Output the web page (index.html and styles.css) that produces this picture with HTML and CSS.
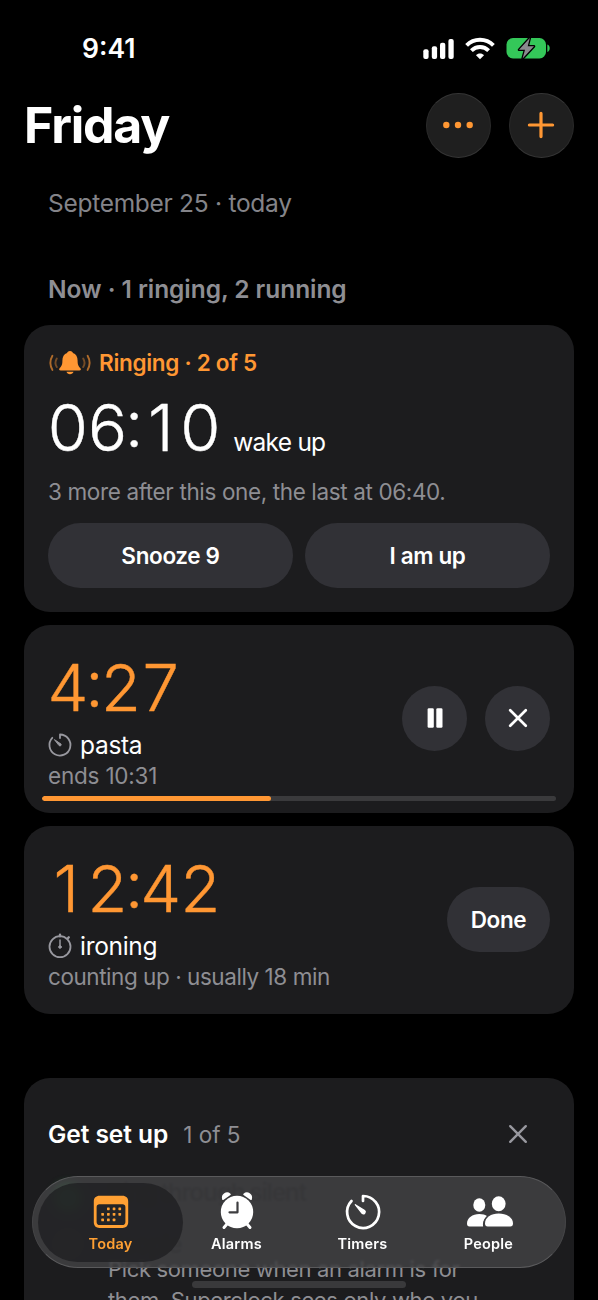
FILE: index.html
```html
<!DOCTYPE html>
<html lang="en">
<head>
<meta charset="utf-8">
<title>Friday</title>
<link rel="stylesheet" href="styles.css">
</head>
<body>
<div class="screen">
  <header class="status">
    <span class="clock">9:41</span>
    <svg class="status-icons" width="128" height="24" viewBox="0 0 128 24">
      <g fill="#fff">
        <rect x="1.300" y="13.300" width="5.300" height="9.700" rx="2"/>
        <rect x="9.800" y="10.300" width="5.300" height="12.700" rx="2"/>
        <rect x="18" y="6.700" width="5.300" height="16.300" rx="2"/>
        <rect x="26.400" y="3" width="5.300" height="20" rx="2"/>
      </g>
      <g fill="none" stroke="#fff" stroke-width="3.900">
        <path d="M44.600 9.400a18.600 18.600 0 0 1 26.800 0"/>
        <path d="M49.400 14.600a12 12 0 0 1 17.200 0"/>
      </g>
      <path fill="#fff" d="M58 23.200l-4-4c1.900-2.400 6.100-2.400 8 0z"/>
      <rect x="84.500" y="2" width="39.500" height="20.500" rx="6.500" fill="#34c759"/>
      <path d="M125.300 8.500c3.200 1.200 3.200 6.300 0 7.500z" fill="#34c759"/>
      <path d="M107.800 2L97 13.800h6l-2.400 8.700L112 10.300h-6.300z" fill="#8a8a8e" stroke="#000" stroke-width="2.600" stroke-linejoin="round" paint-order="stroke"/>
    </svg>
  </header>

  <div class="title-row">
    <h1>Friday</h1>
    <button class="glass"><svg width="32" height="32" viewBox="0 0 32 32" fill="#ff9733"><circle cx="4.300" cy="16" r="3.200"/><circle cx="16" cy="16" r="3.200"/><circle cx="27.700" cy="16" r="3.200"/></svg></button>
    <button class="glass"><svg width="32" height="32" viewBox="0 0 32 32" stroke="#ff9733" stroke-width="3.200" stroke-linecap="round"><path d="M16 4.400v23.200M4.400 16h23.200"/></svg></button>
  </div>
  <p class="date">September 25 · today</p>
  <h2 class="section">Now · 1 ringing, 2 running</h2>

  <section class="card ringing">
    <div class="ring-label">
      <svg width="42" height="26" viewBox="0 0 42 26">
        <path fill="#ff9733" d="M21 1c-1.800 0-2.700 1-2.900 2.100-3.200 1-4.700 3.900-4.700 7.400 0 4.200-.8 5.500-2.400 7.300-1.500 1.600-.9 2.700.7 2.700h18.600c1.600 0 2.200-1.100.7-2.700-1.600-1.800-2.400-3.100-2.400-7.300 0-3.500-1.500-6.400-4.700-7.400C23.700 2 22.800 1 21 1zM17.500 21.700h7c-.6 3.300-6.400 3.300-7 0z"/>
        <g fill="none" stroke="#ff9733" stroke-width="1.900" stroke-linecap="round">
          <path opacity=".4" d="M7.800 8.500q-2.700 4.300 0 8.600M34.200 8.500q2.700 4.300 0 8.600"/>
          <path opacity=".65" d="M3.400 5.700q-4 7 0 14.200M38.600 5.700q4 7 0 14.200"/>
        </g>
      </svg>
      <span>Ringing · 2 of 5</span>
    </div>
    <div class="alarm"><div class="time"><span>0</span><span>6</span><i>:</i><span>1</span><span>0</span></div><span class="name">wake up</span></div>
    <p class="note">3 more after this one, the last at 06:40.</p>
    <div class="actions"><button class="pill">Snooze 9</button><button class="pill">I am up</button></div>
  </section>

  <section class="card">
    <div class="timer">
      <div class="details">
        <div class="time"><span>4</span><i>:</i><span>2</span><span>7</span></div>
        <div class="label">
          <svg width="24" height="24" viewBox="0 0 24 24" fill="none" stroke="#98989f" stroke-width="1.800" stroke-linecap="round" stroke-linejoin="round"><path d="M12 5V1.500a10.500 10.500 0 1 1-7.700 3.300"/><path fill="#98989f" stroke-width="1" d="M6.700 6.800l6.300 4.300a1.200 1.200 0 0 1-1.600 1.700z"/></svg>
          <span>pasta</span>
        </div>
        <p class="sub ends">ends 10:31</p>
      </div>
      <div class="controls">
        <button class="round"><svg width="20" height="20" viewBox="0 0 20 20" fill="#fff"><rect x="2.600" y=".3" width="6.200" height="19.500" rx="1.300"/><rect x="11.300" y=".3" width="6.200" height="19.500" rx="1.300"/></svg></button>
        <button class="round"><svg width="20" height="20" viewBox="0 0 20 20" stroke="#fff" stroke-width="2.700" stroke-linecap="round"><path d="M2.200 2.200l15.600 15.600M17.800 2.200L2.200 17.800"/></svg></button>
      </div>
    </div>
    <div class="track"><div class="fill" style="width:44.6%"></div></div>
  </section>

  <section class="card">
    <div class="timer">
      <div class="details">
        <div class="time"><span class="lead">1</span><span>2</span><i>:</i><span>4</span><span>2</span></div>
        <div class="label">
          <svg width="24" height="24" viewBox="0 0 24 24" fill="none" stroke="#98989f" stroke-width="1.800" stroke-linecap="round"><circle cx="12" cy="12.700" r="10.500"/><path d="M12 .8v1.400M20.800 3.300l-.9 1" stroke-width="2.400"/><path d="M12 6v6" stroke-width="1.500"/><circle cx="12" cy="13" r="1.300" fill="#98989f" stroke-width="1"/></svg>
          <span>ironing</span>
        </div>
        <p class="sub counting">counting up · usually 18 min</p>
      </div>
      <button class="pill done">Done</button>
    </div>
  </section>

  <section class="card setup">
    <div class="setup-head">
      <h3>Get set up</h3><span>1 of 5</span>
      <svg width="20" height="20" viewBox="0 0 20 20" stroke="#98989f" stroke-width="2.400" stroke-linecap="round"><path d="M2.200 2.200l15.600 15.600M17.800 2.200L2.200 17.800"/></svg>
    </div>
    <div class="step"><i class="check"></i><b>Ring through silent</b></div>
    <div class="step person"><i class="dot"></i><b>People</b></div>
    <p class="body">Pick someone when an alarm is for<br>them. Superclock sees only who you</p>
  </section>

  <div class="home"></div>
  <nav class="tabs">
    <a class="tab active"><svg width="40" height="40" viewBox="0 0 40 40"><path fill="#ffa033" fill-rule="evenodd" d="M8.500 3.800h23c3.500 0 5.700 2.200 5.700 5.700v20.700c0 3.500-2.200 5.700-5.700 5.700h-23c-3.500 0-5.700-2.200-5.700-5.700V9.500c0-3.500 2.200-5.700 5.700-5.700zM8.400 12.300c-1.700 0-2.800 1-2.800 2.700v14.900c0 2 1.200 3.200 3.200 3.200h22.400c2 0 3.200-1.200 3.200-3.200V15c0-1.700-1.100-2.700-2.800-2.700z"/><g fill="#ffa033"><rect x="16" y="15.500" width="2.700" height="2.700" rx=".6"/><rect x="21.700" y="15.500" width="2.700" height="2.700" rx=".6"/><rect x="27.400" y="15.500" width="2.700" height="2.700" rx=".6"/><rect x="10.300" y="21" width="2.700" height="2.700" rx=".6"/><rect x="16" y="21" width="2.700" height="2.700" rx=".6"/><rect x="21.700" y="21" width="2.700" height="2.700" rx=".6"/><rect x="27.400" y="21" width="2.700" height="2.700" rx=".6"/><rect x="10.300" y="26.600" width="2.700" height="2.700" rx=".6"/><rect x="16" y="26.600" width="2.700" height="2.700" rx=".6"/><rect x="21.700" y="26.600" width="2.700" height="2.700" rx=".6"/></g></svg><span>Today</span></a>
    <a class="tab"><svg width="40" height="40" viewBox="0 0 40 40"><g stroke="#fff" stroke-width="3" stroke-linecap="round"><path d="M10 32l-3 3.500M30 32l3 3.500"/></g><circle cx="20" cy="20" r="16.200" fill="#fff"/><path fill="#fff" stroke="#fff" stroke-width="1.500" stroke-linejoin="round" d="M5.900 7.300C4.600 2.600 9.600-.6 13 2.400zM34.100 7.300C35.400 2.600 30.400-.6 27 2.400z"/><path d="M20.500 10.500v9.800h-8" fill="none" stroke="#3e3e40" stroke-width="2.200" stroke-linecap="round" stroke-linejoin="round"/></svg><span>Alarms</span></a>
    <a class="tab"><svg width="40" height="40" viewBox="0 0 40 40" fill="none" stroke="#fff" stroke-width="2.700" stroke-linecap="round" stroke-linejoin="round"><path d="M20 9V4a16 16 0 1 1-11.500 5"/><path fill="#fff" stroke-width="1.300" d="M12.300 12.700l9.300 5.900a1.800 1.800 0 0 1-2.500 2.700z"/></svg><span>Timers</span></a>
    <a class="tab"><svg width="48" height="40" viewBox="0 0 48 40" fill="#fff"><ellipse cx="14.300" cy="13" rx="6" ry="6.700"/><path d="M2 31.500C2 26 7.500 22 14.300 22c3.300 0 6 .9 8 2.300-2.900 2.200-4.900 5.600-4.200 10.200H4.500C2.800 34.500 2 33.500 2 31.500z"/><path d="M20 31.500C20 25.500 26 21.600 33.700 21.600S48 25.500 48 31.500c0 2-.9 3-2.700 3H22.700c-1.800 0-2.700-1-2.700-3z" stroke="#3e3e40" stroke-width="3" paint-order="stroke"/><ellipse cx="33.700" cy="11.700" rx="6.900" ry="7.500"/></svg><span>People</span></a>
  </nav>
</div>
</body>
</html>
```

FILE: styles.css
```css
* { box-sizing: border-box; margin: 0; padding: 0; }
body { background: #000; color: #fff; font-family: Inter, "Liberation Sans", sans-serif; }
.screen { position: relative; width: 598px; height: 1300px; overflow: hidden; white-space: nowrap; padding: 0 24px; }
svg { display: block; flex: none; overflow: visible; }
button { border: 0; color: #fff; font: inherit; display: flex; align-items: center; justify-content: center; }

.status { height: 92px; display: flex; justify-content: space-between; padding: 36px 24px 0 58px; }
.clock { font-size: 26.500px; font-weight: 600; line-height: 25px; letter-spacing: 0; }

.title-row { display: flex; align-items: center; gap: 18px; height: 66px; padding-right: 0.500px; }
h1 { flex: 1; font-size: 50px; font-weight: 700; line-height: 66px; letter-spacing: -1.200px; }
.glass { width: 65px; height: 65px; border-radius: 50%; background: #1f1f1f; border: 1px solid #353535; border-left-color: #2a2a2a; border-right-color: #2a2a2a; }
.date { padding-left: 24px; margin-top: 25px; line-height: 40px; font-size: 24.500px; color: #848489; letter-spacing: -0.280px; }
.section { padding-left: 24px; margin-top: 46px; line-height: 40px; font-size: 24.500px; font-weight: 600; color: #8e8e93; letter-spacing: -0.060px; }

.card { background: #1c1c1e; border-radius: 26px; height: 188.500px; margin-bottom: 12.500px; padding: 20px 24px 0; }
.ringing { margin-top: 16px; height: 287px; padding-top: 16px; }
.ring-label { display: flex; align-items: center; gap: 8px; height: 43px; margin: 0 0 1px 1px; color: #ff9733; font-size: 22.500px; font-weight: 600; letter-spacing: -0.3px; }
.alarm { display: flex; align-items: baseline; height: 85px; gap: 13px; }
.time { display: flex; font-size: 65px; font-weight: 300; line-height: 85px; width: max-content; -webkit-text-stroke: 0.4px currentColor; }
.time span { width: 39.700px; display: flex; justify-content: center; }
.time .lead { padding-right: 3px; }
.time i { width: 13.500px; display: flex; justify-content: center; font-style: normal; transform: translateY(-4px); }
.name { font-size: 24.500px; letter-spacing: -0.750px; }
.note { font-size: 22.500px; line-height: 44px; color: #8e8e93; letter-spacing: -0.370px; }
.actions { display: grid; grid-template-columns: 1fr 1fr; gap: 12px; margin-top: 9px; }
.pill { height: 65px; border-radius: 33px; background: #313136; font-size: 22.500px; font-weight: 600; letter-spacing: -0.350px; }

.timer { display: flex; align-items: center; justify-content: space-between; height: 147px; }
.timer .time { color: #ff9733; }
.label { display: flex; align-items: center; gap: 8px; line-height: 30px; height: 30px; font-size: 24.500px; letter-spacing: -0.3px; }
.sub { font-size: 22.500px; line-height: 32px; color: #8e8e93; }
.ends { letter-spacing: -0.200px; }
.counting { letter-spacing: -0.450px; }
.controls { display: flex; gap: 18px; }
.round { width: 65px; height: 65px; border-radius: 50%; background: #313136; }
.track { margin: 4.500px -6px 0; height: 5px; border-radius: 3px; background: #3a3a3c; overflow: hidden; }
.fill { height: 5px; background: #ff9733; border-radius: 3px; }
.done { width: 103px; }

.setup { margin-top: 64px; margin-bottom: 0; height: 240px; padding-top: 36px; border-radius: 26px 26px 0 0; }
.setup-head { display: flex; align-items: center; height: 40px; font-size: 22.500px; color: #8e8e93; padding-right: 22px; }
.setup-head h3 { font-size: 24.500px; font-weight: 600; color: #fff; margin-right: 15px; letter-spacing: -0.050px; }
.setup-head svg { margin-left: auto; }
.step { display: flex; align-items: center; gap: 20px; height: 40px; margin-top: 18px; font-size: 24.500px; color: #000; letter-spacing: -1.300px; }
.person { height: 20px; line-height: 20px; margin-top: 22px; }
.check, .dot { width: 28px; height: 28px; margin: 0 6px; border-radius: 50%; background: #17a03c; }
.check { filter: blur(4px); margin-top: 12px; }
.dot { background: #2d2d30; }
.step b { font-weight: 600; }
.body { font-size: 22px; line-height: 31px; padding-left: 60px; color: #8e8e93; letter-spacing: -0.350px; }

.home { position: absolute; left: 192px; top: 1281px; width: 214px; height: 7px; border-radius: 4px; background: #39393b; }
.tabs { position: absolute; left: 32px; top: 1176px; width: 534px; height: 92px; padding: 6px 6px 6px 5px; border-radius: 46px; border: 1px solid #5a5a5c; border-left-color: #454547; border-right-color: #454547; background: rgba(66,66,68,.84); backdrop-filter: blur(1px); display: flex; }
.tab { width: 145px; height: 79px; margin-right: -19px; border-radius: 40px; display: flex; flex-direction: column; align-items: center; padding-top: 9px; font-size: 14.500px; font-weight: 600; line-height: 23px; letter-spacing: 0.2px; }
.active { background: rgba(31,31,34,.8); color: #ffa033; }
```
